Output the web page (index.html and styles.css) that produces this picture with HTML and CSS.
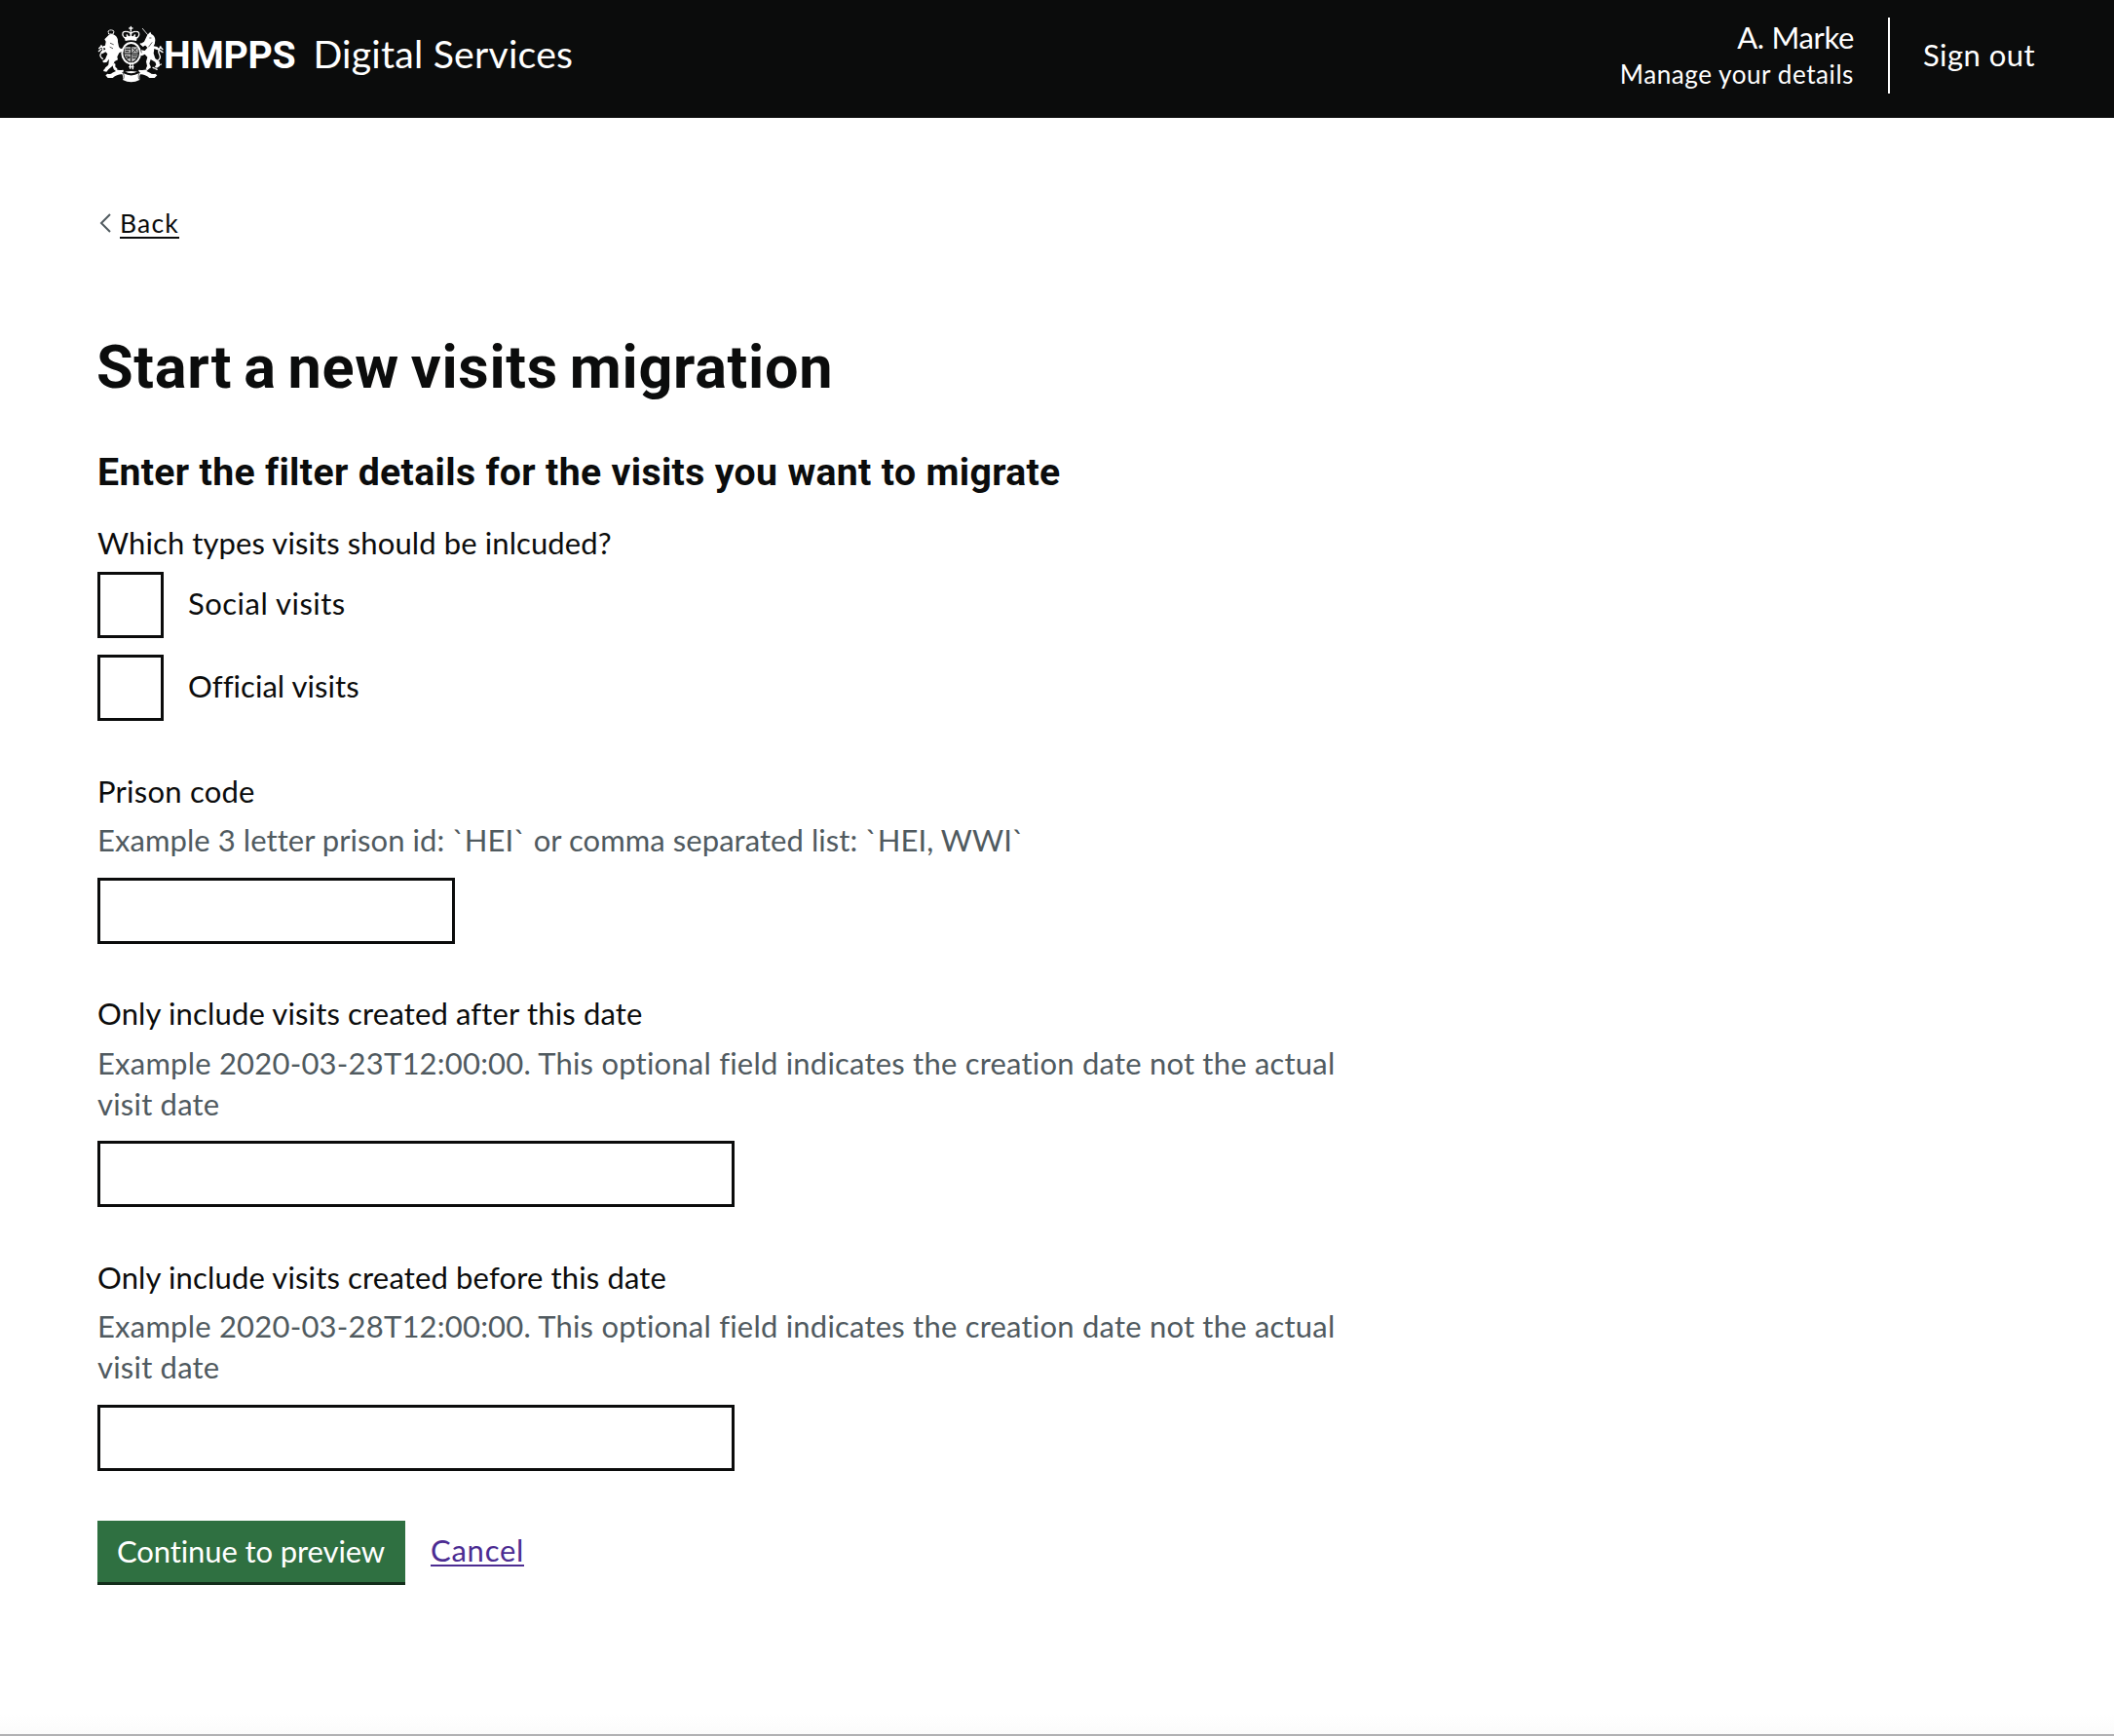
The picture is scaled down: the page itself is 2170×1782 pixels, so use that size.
FILE: index.html
```html
<!DOCTYPE html>
<html lang="en">
<head>
<meta charset="utf-8">
<title>Start a new visits migration</title>
<link rel="stylesheet" href="styles.css">
</head>
<body>
<header class="header">
  <div class="brand">
    <svg class="crest" viewBox="0 0 210 192" fill="none" stroke="#fff" stroke-linecap="round" stroke-linejoin="round" aria-hidden="true">
      <!-- crown -->
      <path d="M106 10v14M101 15h10" stroke-width="4"/>
      <path d="M86 44C77 34 80 25 90 25c8 0 13 3 16 7 3-4 8-7 16-7 10 0 13 9 4 19" stroke-width="4" stroke-dasharray="4 3"/>
      <path d="M106 28v14M94 36l3 7M118 36l-3 7" stroke-width="5"/>
      <path d="M86 43q20-8 40 0l-3 11q-17-5-34 0z" fill="#fff" stroke="none"/>
      <!-- garter and shield -->
      <ellipse cx="107" cy="92" rx="28" ry="32" stroke-width="6"/>
      <path d="M86 73h42v22q-2 16-21 25-19-9-21-25z" fill="#bbb" stroke="none"/>
      <g stroke="#0b0c0c" stroke-width="3">
        <path d="M107 71v48M86 93h42"/>
        <path d="M90 79h13M90 86h9M113 77l10 10M124 77l-11 11M91 101l11 2M93 108l9-2M112 99h12M112 106h9" stroke-width="3"/>
      </g>
      <path d="M104 126v14M112 128v12M101 134h13" stroke-width="4" stroke-dasharray="5 3"/>
      <!-- lion -->
      <path d="M36 24q8-7 18 0l-2 9H38z" stroke-width="3" stroke-dasharray="4 3"/>
      <path d="M37 37q8-8 19-1 11 7 10 21l3 15q4 8 11 5l3 8-13 6-6 12 2 9-10 5-5 13-14 12-6 7-10-2 3-7 9-3 4-10 2-17-8 10-9 1-4-5 9-6 7-16-6-6-9 5-7-2 4-6 12-5-3-5-8 1 3-6 7-2 2-12-4-7z" fill="#fff" stroke="none"/>
      <path d="M19 109q-13-9-3-19t-2-21M16 69l-8 8M15 79l-8 7" stroke-width="4"/>
      <path d="M48 126q-9 4-18 12M55 127q-4 9 6 14" stroke-width="7"/>
      <path d="M43 61l9 4M42 73l8 4" stroke="#0b0c0c" stroke-width="2"/>
      <!-- unicorn -->
      <path d="M142 16l15 18" stroke-width="2.5"/>
      <path d="M157 35l9-9 3 7q12 5 12 19 0 11-5 18l11 2 8 8-8 2-9-4-2 14 5 16 13 10 1 13-9 6-7-2 5-8-3-8-14-8-4 13 5 12-9 6-7-2 4-9-3-13 4-14-8-9-9 5-8-4 8-4-2-10 11 2 8-9-6-7-9 2-6-7 11-7z" fill="#fff" stroke="none"/>
      <path d="M144 70l-8-7M145 91l-10 4" stroke-width="4"/>
      <path d="M186 116q15-8 8-20t4-24M196 72l8 8M194 82l10 7" stroke-width="4"/>
      <path d="M171 59l-10 13M164 45h4" stroke="#0b0c0c" stroke-width="2"/>
      <path d="M174 136l15 7M189 131l10-5" stroke-width="4" stroke-dasharray="5 4"/>
      <!-- motto ribbon -->
      <path d="M50 139q16 8 32 4l4 8-9 6q-14 0-27 11H35l-7-8 6-5q10 3 15-3l11-5zM163 139q-16 8-32 4l-4 8 9 6q14 0 27 11h16l8-8-6-5q-11 3-16-3l-11-5z" fill="#fff" stroke="none"/>
      <path d="M77 152q30-10 60 0-6 8-4 22-26 14-52 0 2-14-4-22z" fill="#fff" stroke="none"/>
      <path d="M80 151q8 7 3 20M134 151q-8 7-3 20" stroke="#0b0c0c" stroke-width="2"/>
      <path d="M85 151q22 12 44 0" stroke="#0b0c0c" stroke-width="7"/>
    </svg>
    <div class="brand-text"><span class="organisation">HMPPS</span><span class="service">Digital Services</span></div>
  </div>
  <div class="account">
    <div class="user"><span class="user-name">A. Marke</span><span class="user-manage">Manage your details</span></div>
    <span class="sign-out">Sign out</span>
  </div>
</header>
<main class="main">
  <a class="back"><svg class="chevron" viewBox="0 0 12 20"><path d="M11 1L2 10l9 9" fill="none" stroke="#505a5f" stroke-width="2"/></svg><span class="back-text">Back</span></a>
  <h1 class="title">Start a new visits migration</h1>
  <h2 class="subtitle">Enter the filter details for the visits you want to migrate</h2>
  <form class="form">
    <div class="group">
      <div class="legend">Which types visits should be inlcuded?</div>
      <div class="checks">
        <div class="check"><span class="box"></span><label class="check-label">Social visits</label></div>
        <div class="check"><span class="box"></span><label class="check-label check-label-official">Official visits</label></div>
      </div>
    </div>
    <div class="group">
      <label class="label label-prison">Prison code</label>
      <div class="hint hint-prison">Example 3 letter prison id: `HEI` or comma separated list: `HEI, WWI`</div>
      <input class="input input-short" type="text">
    </div>
    <div class="group">
      <label class="label">Only include visits created after this date</label>
      <div class="hint">Example 2020-03-23T12:00:00. This optional field indicates the creation date not the actual<br>visit date</div>
      <input class="input" type="text">
    </div>
    <div class="group">
      <label class="label">Only include visits created before this date</label>
      <div class="hint">Example 2020-03-28T12:00:00. This optional field indicates the creation date not the actual<br>visit date</div>
      <input class="input" type="text">
    </div>
    <div class="actions">
      <button class="button" type="button">Continue to preview</button>
      <a class="cancel">Cancel</a>
    </div>
  </form>
</main>
<footer class="footer"></footer>
</body>
</html>
```

FILE: styles.css
```css
* { box-sizing: border-box; }

body {
  margin: 0;
  height: 1782px;
  display: flex;
  flex-direction: column;
  background: #fff;
  color: #0b0c0c;
  font: 31px/42px Lato, "Noto Sans", sans-serif;
  font-kerning: normal;
  font-variant-ligatures: none;
}

.header {
  flex: none;
  height: 121px;
  padding: 0 81px 0 99px;
  display: flex;
  justify-content: space-between;
  align-items: flex-start;
  background: #0b0c0c;
  color: #fff;
}

.brand { display: flex; padding-top: 24px; }
.crest { width: 70px; height: 64px; }
.brand-text {
  display: flex;
  align-items: baseline;
  gap: 18px;
  margin: 6px 0 0 -1px;
  font-size: 39.2px;
  line-height: 50px;
}
.organisation { font-family: Roboto, sans-serif; font-weight: 700; letter-spacing: -0.23px; }
.service { letter-spacing: 0.23px; }

.account { display: flex; margin-top: 18px; }
.user {
  height: 78px;
  padding-right: 35px;
  border-right: 2px solid #fff;
  display: flex;
  flex-direction: column;
  align-items: flex-end;
}
.user-name { letter-spacing: -0.34px; line-height: 41px; }
.user-manage { font-size: 26.1px; line-height: 34px; letter-spacing: 0.54px; }
.sign-out { margin-top: 17px; padding-left: 34px; letter-spacing: 0.45px; }

.main { flex: 1; padding: 91px 100px 0; }

.back { display: flex; align-items: center; height: 34px; font-size: 26.5px; line-height: 32px; }
.chevron { width: 12px; height: 20px; margin: 0 9px 0 2px; }
.back-text { border-bottom: 2px solid #0b0c0c; line-height: 30px; height: 31px; letter-spacing: 1.2px; }

.title {
  margin: 99px 0 51px -1px;
  font: 700 61.2px/64px Roboto, sans-serif;
  letter-spacing: 0.7px;
  word-spacing: -4px;
}
.subtitle {
  margin: 0 0 26px;
  font: 700 39.2px/50px Roboto, sans-serif;
  letter-spacing: 0.34px;
}

.group { margin-bottom: 50.5px; }
.legend { margin-bottom: 9px; letter-spacing: 0.1px; }
.checks { display: flex; flex-direction: column; gap: 17px; }
.check { display: flex; align-items: center; }
.box { width: 68px; height: 68px; border: 3px solid #0b0c0c; }
.check-label { padding: 0 0 4px 25px; letter-spacing: 0.5px; }
.check-label-official { letter-spacing: 0.05px; }

.label { display: block; margin-bottom: 8.5px; letter-spacing: 0.15px; }
.label-prison { letter-spacing: 0.23px; }
.hint { margin-bottom: 17.5px; color: #505a5f; letter-spacing: 0.21px; white-space: nowrap; }
.hint-prison { letter-spacing: 0.06px; }

.input {
  display: block;
  width: 654px;
  height: 68px;
  padding: 8px;
  border: 3px solid #0b0c0c;
  border-radius: 0;
  background: #fff;
  font: inherit;
}
.input-short { width: 367px; }

.actions { display: flex; align-items: flex-start; gap: 26px; padding-top: 1px; }
.button {
  width: 316px;
  height: 63px;
  padding: 0 1px 2px 0;
  border: 0;
  border-radius: 0;
  background: #2f7041;
  box-shadow: 0 3px 0 #132e1b;
  color: #fff;
  font: inherit;
  letter-spacing: -0.1px;
}
.cancel {
  height: 38px;
  margin-top: 9px;
  border-bottom: 2px solid #4c2c92;
  color: #4c2c92;
  letter-spacing: 0.75px;
}

.footer { flex: none; height: 22px; background: linear-gradient(#fff, #fbfbfb); border-bottom: 2px solid #b1b1b3; }
```
